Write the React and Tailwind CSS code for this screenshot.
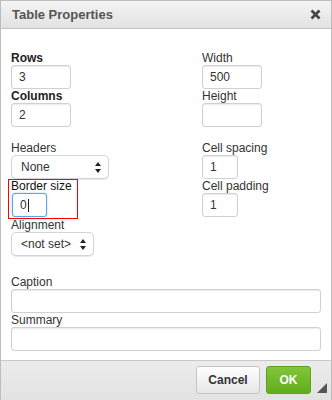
import React from "react";

const font = { fontFamily: '"Liberation Sans", Arial, sans-serif' };

function Label({ children, bold, short }) {
  return (
    <div
      className={`${short ? "h-[13px] leading-[13px]" : "h-[14px] leading-[14px]"} text-[12px] ${
        bold ? "font-bold text-[#222]" : "text-[#333]"
      }`}
    >
      {children}
    </div>
  );
}

function TextBox({ value, width, focused }) {
  return (
    <div
      className={`flex h-[24px] items-center rounded-[3px] border bg-white pl-[7px] text-[12px] text-[#333] ${
        focused
          ? "border-[#59a5e5] shadow-[0_0_2px_rgba(89,165,229,0.6)]"
          : "border-[#d0d0d0] shadow-[inset_0_1px_1px_rgba(0,0,0,0.08)]"
      }`}
      style={{ width }}
    >
      {value}
      {focused ? <span className="ml-[1px] inline-block h-[13px] w-px bg-[#222]" /> : null}
    </div>
  );
}

function Select({ value, width }) {
  return (
    <div
      className="flex h-[24px] items-center justify-between rounded-[5px] border border-[#d4d4d4] bg-white pl-[9px] pr-[7px] text-[12px] text-[#333] shadow-[0_1px_1px_rgba(0,0,0,0.1)]"
      style={{ width }}
    >
      <span>{value}</span>
      <svg width="6" height="11" viewBox="0 0 6 11">
        <path d="M3 0 L6 4 L0 4 Z" fill="#222" />
        <path d="M0 7 L6 7 L3 11 Z" fill="#222" />
      </svg>
    </div>
  );
}

export default function App() {
  return (
    <div
      className="flex h-[400px] w-[332px] flex-col border-x border-t border-[#bdbdbd] bg-white"
      style={font}
    >
      <div className="flex h-[28px] shrink-0 items-center justify-between border-b border-[#c2c2c2] bg-gradient-to-b from-[#f4f4f4] to-[#e2e2e2] pl-[11px] pr-[10px]">
        <span className="text-[13px] font-bold text-[#555]">Table Properties</span>
        <svg width="11" height="11" viewBox="0 0 11 11">
          <path d="M1.5 1.5 L9.5 9.5 M9.5 1.5 L1.5 9.5" stroke="#444" strokeWidth="2.6" />
        </svg>
      </div>

      <div className="flex flex-1 flex-col px-[10px] pt-[22px]">
        <div className="flex">
          <div className="flex w-[191px] flex-col">
            <Label bold>Rows</Label>
            <TextBox value="3" width={60} />
            <Label bold>Columns</Label>
            <TextBox value="2" width={60} />

            <div className="mt-[14px]">
              <Label>Headers</Label>
            </div>
            <Select value="None" width={98} />

            {/* highlighted field */}
            <div className="-ml-[3px] flex w-[70px] flex-col border border-[#ff0000] pb-px pl-[2px]">
              <div className="h-[13px] text-[12px] leading-[13px] text-[#111]">Border size</div>
              <div className="ml-px">
                <TextBox value="0" width={35} focused />
              </div>
            </div>
            <Label short>Alignment</Label>
            <Select value="<not set>" width={83} />
          </div>

          <div className="flex flex-col">
            <Label>Width</Label>
            <TextBox value="500" width={60} />
            <Label>Height</Label>
            <TextBox value="" width={60} />

            <div className="mt-[14px]">
              <Label>Cell spacing</Label>
            </div>
            <TextBox value="1" width={36} />
            <Label>Cell padding</Label>
            <TextBox value="1" width={36} />
          </div>
        </div>

        <div className="mt-[19px]">
          <Label>Caption</Label>
        </div>
        <TextBox value="" width={310} />
        <Label>Summary</Label>
        <TextBox value="" width={310} />
      </div>

      <div className="relative flex h-[40px] shrink-0 items-start justify-end gap-[6px] border-t border-[#c8c8c8] bg-gradient-to-b from-[#ececec] to-[#e2e2e2] pr-[20px] pt-[5px]">
        <div className="flex h-[28px] w-[64px] items-center justify-center rounded-[3px] border border-[#c4c4c4] bg-gradient-to-b from-[#ffffff] to-[#e6e6e6] text-[12px] font-bold text-[#333]">
          Cancel
        </div>
        <div className="flex h-[28px] w-[45px] items-center justify-center rounded-[3px] border border-[#5da41a] bg-gradient-to-b from-[#80c63a] to-[#62ad1b] text-[12px] font-bold text-white">
          OK
        </div>
        <svg className="absolute bottom-[7px] right-[4px]" width="10" height="10" viewBox="0 0 10 10">
          <path d="M10 0 L10 10 L0 10 Z" fill="#555" />
        </svg>
      </div>
    </div>
  );
}
